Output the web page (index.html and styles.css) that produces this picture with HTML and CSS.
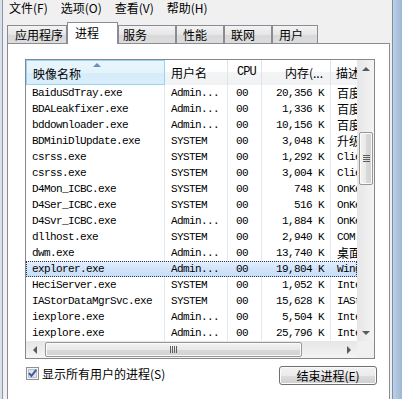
FILE: index.html
```html
<!DOCTYPE html>
<html lang="zh-CN">
<head>
  <meta charset="UTF-8">
  <title>Windows 任务管理器</title>
  <link rel="stylesheet" href="styles.css">
</head>
<body>
  <div class="window">
    <div class="frame-left"></div>
    <div class="main">
      <!-- Menu -->
      <div class="menubar">
        <span>文件(F)</span>
        <span>选项(O)</span>
        <span>查看(V)</span>
        <span>帮助(H)</span>
      </div>

      <!-- Tabs -->
      <div class="tabs">
        <div class="tab t-apps">应用程序</div>
        <div class="tab active">进程</div>
        <div class="tab t-svc">服务</div>
        <div class="tab t-perf">性能</div>
        <div class="tab t-net">联网</div>
        <div class="tab t-users">用户</div>
      </div>

      <div class="panel">
        <div class="listview">
          <div class="lv-content">
            <div class="lv-header">
              <div class="hcell c-name sorted">映像名称<span class="sort-arrow"></span></div>
              <div class="hcell c-user">用户名</div>
              <div class="hcell c-cpu mono">CPU</div>
              <div class="hcell c-mem">内存(...</div>
              <div class="hcell c-desc">描述</div>
            </div>
            <div class="lv-rows">
              <div class="row"><div class="cell c-name">BaiduSdTray.exe</div><div class="cell c-user">Admin...</div><div class="cell c-cpu">00</div><div class="cell c-mem">20,356 K</div><div class="cell c-desc cjk">百度卫士</div></div>
              <div class="row"><div class="cell c-name">BDALeakfixer.exe</div><div class="cell c-user">Admin...</div><div class="cell c-cpu">00</div><div class="cell c-mem">1,336 K</div><div class="cell c-desc cjk">百度卫士</div></div>
              <div class="row"><div class="cell c-name">bddownloader.exe</div><div class="cell c-user">Admin...</div><div class="cell c-cpu">00</div><div class="cell c-mem">10,156 K</div><div class="cell c-desc cjk">百度下载</div></div>
              <div class="row"><div class="cell c-name">BDMiniDlUpdate.exe</div><div class="cell c-user">SYSTEM</div><div class="cell c-cpu">00</div><div class="cell c-mem">3,048 K</div><div class="cell c-desc cjk">升级服务</div></div>
              <div class="row"><div class="cell c-name">csrss.exe</div><div class="cell c-user">SYSTEM</div><div class="cell c-cpu">00</div><div class="cell c-mem">1,292 K</div><div class="cell c-desc">Client Server</div></div>
              <div class="row"><div class="cell c-name">csrss.exe</div><div class="cell c-user">SYSTEM</div><div class="cell c-cpu">00</div><div class="cell c-mem">3,004 K</div><div class="cell c-desc">Client Server</div></div>
              <div class="row"><div class="cell c-name">D4Mon_ICBC.exe</div><div class="cell c-user">SYSTEM</div><div class="cell c-cpu">00</div><div class="cell c-mem">748 K</div><div class="cell c-desc">OnKey</div></div>
              <div class="row"><div class="cell c-name">D4Ser_ICBC.exe</div><div class="cell c-user">SYSTEM</div><div class="cell c-cpu">00</div><div class="cell c-mem">516 K</div><div class="cell c-desc">OnKey</div></div>
              <div class="row"><div class="cell c-name">D4Svr_ICBC.exe</div><div class="cell c-user">Admin...</div><div class="cell c-cpu">00</div><div class="cell c-mem">1,884 K</div><div class="cell c-desc">OnKey</div></div>
              <div class="row"><div class="cell c-name">dllhost.exe</div><div class="cell c-user">SYSTEM</div><div class="cell c-cpu">00</div><div class="cell c-mem">2,940 K</div><div class="cell c-desc">COM Surrogate</div></div>
              <div class="row"><div class="cell c-name">dwm.exe</div><div class="cell c-user">Admin...</div><div class="cell c-cpu">00</div><div class="cell c-mem">13,740 K</div><div class="cell c-desc cjk">桌面窗口</div></div>
              <div class="row selected"><div class="cell c-name">explorer.exe</div><div class="cell c-user">Admin...</div><div class="cell c-cpu">00</div><div class="cell c-mem">19,804 K</div><div class="cell c-desc">Windows</div></div>
              <div class="row"><div class="cell c-name">HeciServer.exe</div><div class="cell c-user">SYSTEM</div><div class="cell c-cpu">00</div><div class="cell c-mem">1,052 K</div><div class="cell c-desc">Intel</div></div>
              <div class="row"><div class="cell c-name">IAStorDataMgrSvc.exe</div><div class="cell c-user">SYSTEM</div><div class="cell c-cpu">00</div><div class="cell c-mem">15,628 K</div><div class="cell c-desc">IAStor</div></div>
              <div class="row"><div class="cell c-name">iexplore.exe</div><div class="cell c-user">Admin...</div><div class="cell c-cpu">00</div><div class="cell c-mem">5,504 K</div><div class="cell c-desc">Internet</div></div>
              <div class="row"><div class="cell c-name">iexplore.exe</div><div class="cell c-user">Admin...</div><div class="cell c-cpu">00</div><div class="cell c-mem">25,796 K</div><div class="cell c-desc">Internet</div></div>
            </div>
          </div>

          <!-- Vertical scrollbar -->
          <div class="vscroll">
            <div class="sb-btn"><span class="arrow up"></span></div>
            <div class="vtrack">
              <div class="vthumb"><span class="grip-h"></span></div>
            </div>
            <div class="sb-btn"><span class="arrow down"></span></div>
          </div>

          <!-- Horizontal scrollbar -->
          <div class="hscroll">
            <div class="sb-btn"><span class="arrow left"></span></div>
            <div class="htrack">
              <div class="hthumb"><span class="grip-v"></span></div>
            </div>
            <div class="sb-btn"><span class="arrow right"></span></div>
          </div>
          <div class="corner"></div>
        </div>

        <div class="footer">
          <label class="check">
            <svg width="13" height="13" viewBox="0 0 13 13">
              <rect x="0.5" y="0.5" width="12" height="12" fill="#f6f6f6" stroke="#8e8f8f"/>
              <rect x="2.5" y="2.5" width="8" height="8" fill="#dfe4ea" stroke="#b9c0ca"/>
              <path d="M3 6.2 L5.4 9 L10.2 2.8" fill="none" stroke="#3b5aa0" stroke-width="2"/>
            </svg>
            <span>显示所有用户的进程(S)</span>
          </label>
          <button type="button" class="btn">结束进程(E)</button>
        </div>
      </div>
    </div>
    <div class="frame-right"></div>
  </div>
</body>
</html>
```

FILE: styles.css
```css
body {
  margin: 0;
  background-color: #f0f0f0;
  font-family: "Noto Sans CJK SC", "Liberation Sans", sans-serif;
  font-size: 12px;
  color: #000;
}
.window {
  display: flex;
  width: 402px;
  height: 399px;
  overflow: hidden;
}
.frame-left {
  width: 2px;
  background: #d9e0e8;
  border-right: 1px solid #8796a8;
}
.frame-right {
  width: 9px;
  border-left: 1px solid #7f8fa3;
  background: linear-gradient(to right, #bdd0e6, #9cb7d5);
}
.main {
  flex: 1;
  min-width: 0;
  display: flex;
  flex-direction: column;
  overflow: hidden;
}

/* menu bar */
.menubar {
  flex: none;
  height: 19px;
  display: flex;
  gap: 13px;
  padding-left: 6px;
  line-height: 16px;
}

/* tabs */
.tabs {
  flex: none;
  height: 24px;
  display: flex;
  align-items: flex-end;
  padding-left: 4px;
}
.tab {
  box-sizing: border-box;
  height: 18px;
  padding-left: 6px;
  border: 1px solid #898c95;
  border-bottom: none;
  background: linear-gradient(#f3f3f3, #e6e6e6 50%, #d9d9d9 50%, #dcdcdc);
  line-height: 18px;
  white-space: nowrap;
}
.tab.active {
  position: relative;
  z-index: 1;
  width: 51px;
  height: 22px;
  margin-bottom: -1px;
  padding-left: 7px;
  background: #fff;
  line-height: 20px;
}
.t-apps { width: 60px; padding-left: 7px; }
.t-svc { width: 58px; padding-left: 4px; }
.t-perf { width: 48px; }
.t-net { width: 48px; }
.t-users { width: 46px; }

/* tab panel */
.panel {
  flex: none;
  height: 380px;
  margin: 0 2px 0 4px;
  padding: 15px 14px 0 17px;
  background: #fff;
  border: 1px solid #898c95;
}

/* list view */
.listview {
  width: 348px;
  height: 298px;
  border: 1px solid #828790;
  display: grid;
  grid-template-columns: 331px 17px;
  grid-template-rows: 281px 17px;
}
.lv-content {
  overflow: hidden;
  display: flex;
  flex-direction: column;
}
.lv-header {
  display: flex;
  height: 25px;
  flex: none;
}
.hcell {
  position: relative;
  box-sizing: border-box;
  height: 25px;
  padding-top: 4px;
  line-height: 17px;
  white-space: nowrap;
  overflow: hidden;
  border-right: 1px solid #e2e3e5;
  background: linear-gradient(#ffffff, #ffffff 45%, #f3f4f6 50%, #f1f2f4);
}
.hcell.sorted {
  border: 1px solid #96d4f4;
  background: linear-gradient(#eaf6fd, #e3f2fb 50%, #d6ecf9 50%, #d9eefa);
}
.sort-arrow {
  position: absolute;
  left: 66px;
  top: 2px;
  width: 0;
  height: 0;
  border-left: 4px solid transparent;
  border-right: 4px solid transparent;
  border-bottom: 4px solid #6f8fb0;
}
.mono,
.row {
  font-family: "Liberation Mono", "Noto Sans CJK SC", monospace;
  font-size: 11px;
  letter-spacing: -0.6px;
}
.hcell.mono {
  font-size: 12px;
  letter-spacing: -1px;
}
.c-name { width: 139px; padding-left: 6px; }
.c-user { width: 63px; padding-left: 6px; }
.c-cpu { width: 34px; padding-left: 8px; }
.c-mem { width: 69px; padding-right: 6px; text-align: right; }
.c-desc { width: 26px; padding-left: 6px; border-right: none; }
.hcell.c-name { padding-left: 6px; }
.hcell.c-cpu { padding-left: 9px; }
.hcell.c-mem { padding-right: 7px; }
.hcell.c-desc { padding-left: 5px; }

.lv-rows {
  flex: 1;
  overflow: hidden;
}
.row {
  display: flex;
  height: 16px;
  line-height: 16px;
}
.cell {
  box-sizing: border-box;
  height: 16px;
  white-space: nowrap;
  overflow: hidden;
  border-right: 1px solid #e3e9f1;
}
.cell.c-desc { border-right: none; }
.cell.cjk {
  font-family: "Noto Sans CJK SC", sans-serif;
  font-size: 12px;
  letter-spacing: 0;
}
.row.selected {
  background: linear-gradient(#e6f0fc, #d2e4fa 50%, #c6ddf8);
  outline: 1px dotted #26374f;
  outline-offset: -1px;
}
.row.selected .cell { border-right-color: transparent; }

/* scrollbars */
.vscroll {
  display: flex;
  flex-direction: column;
  background: linear-gradient(to right, #e6e6e6, #f4f4f4);
}
.hscroll {
  display: flex;
  background: linear-gradient(#e6e6e6, #f4f4f4);
}
.corner {
  background: #f0f0f0;
}
.sb-btn {
  flex: none;
  width: 17px;
  height: 17px;
  display: flex;
  align-items: center;
  justify-content: center;
}
.arrow {
  width: 0;
  height: 0;
}
.arrow.up {
  border-left: 4px solid transparent;
  border-right: 4px solid transparent;
  border-bottom: 4px solid #5a5a5a;
}
.arrow.down {
  border-left: 4px solid transparent;
  border-right: 4px solid transparent;
  border-top: 4px solid #5a5a5a;
}
.arrow.left {
  border-top: 4px solid transparent;
  border-bottom: 4px solid transparent;
  border-right: 4px solid #5a5a5a;
}
.arrow.right {
  border-top: 4px solid transparent;
  border-bottom: 4px solid transparent;
  border-left: 4px solid #5a5a5a;
}
.vtrack {
  flex: 1;
}
.vthumb {
  box-sizing: border-box;
  width: 14px;
  height: 53px;
  margin: 55px 0 0 2px;
  border: 1px solid #979797;
  border-radius: 2px;
  background: linear-gradient(to right, #f3f3f3, #e8e8e8 50%, #d9d9d9 50%, #d2d2d2);
  box-shadow: inset 0 0 0 1px #fafafa;
  display: flex;
  align-items: center;
  justify-content: center;
}
.htrack {
  flex: 1;
}
.hthumb {
  box-sizing: border-box;
  width: 257px;
  height: 15px;
  margin: 1px 0 0 2px;
  border: 1px solid #979797;
  border-radius: 2px;
  background: linear-gradient(#f3f3f3, #e8e8e8 50%, #d9d9d9 50%, #d2d2d2);
  box-shadow: inset 0 0 0 1px #fafafa;
  display: flex;
  align-items: center;
  justify-content: center;
}
.grip-h {
  width: 7px;
  height: 7px;
  background: repeating-linear-gradient(#5e5e5e 0 1px, transparent 1px 2px);
}
.grip-v {
  width: 7px;
  height: 7px;
  background: repeating-linear-gradient(to right, #5e5e5e 0 1px, transparent 1px 2px);
}

/* footer */
.footer {
  display: flex;
  justify-content: space-between;
  align-items: center;
  margin: 7px -2px 0 0;
  padding-left: 1px;
}
.check {
  display: flex;
  align-items: center;
  gap: 3px;
  line-height: 17px;
  margin-top: -5px;
}
.check svg {
  display: block;
}
.btn {
  box-sizing: border-box;
  width: 98px;
  height: 19px;
  padding: 0;
  border: 1px solid #707070;
  border-radius: 3px;
  background: linear-gradient(#f2f2f2, #ebebeb 50%, #dddddd 50%, #cfcfcf);
  box-shadow: inset 0 0 0 1px #fbfbfb;
  font-family: "Noto Sans CJK SC", "Liberation Sans", sans-serif;
  font-size: 12px;
  line-height: 17px;
  color: #000;
}
```
